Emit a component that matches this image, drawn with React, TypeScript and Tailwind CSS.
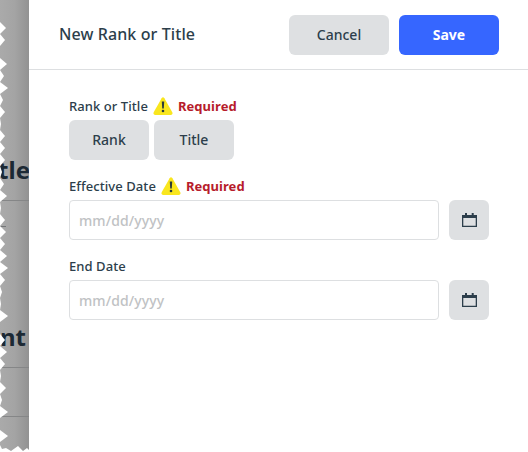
import { useState } from 'react'
import type { ReactNode } from 'react'

// depth of each notch in the torn left edge, one every 12px
const NOTCHES = [
  [28, 6], [40, 5], [64, 7], [76, 4], [88, 8], [100, 3], [112, 5], [124, 1], [136, 5], [148, 5],
  [160, 5], [172, 2], [184, 4], [196, 7], [208, 1], [220, 5], [232, 6], [244, 5], [256, 7], [268, 8],
  [280, 5], [292, 2], [304, 1], [316, 8], [340, 5], [352, 7], [364, 5], [376, 1], [388, 6],
  [400, 2], [412, 8], [436, 8],
]

function TornEdge() {
  return (
    <svg className="absolute inset-0" width="29" height="452" viewBox="0 0 29 452" fill="#fff">
      {NOTCHES.map(([y, depth]) => (
        <polygon key={y} points={`0,${y - 6} ${depth},${y} 0,${y + 6}`} />
      ))}
      <polygon points="0,445 2,449 6,448 11,451 18,446 23,451 27,448 29,450 29,452 0,452" />
    </svg>
  )
}

function WarningIcon() {
  return (
    <svg width="20" height="18" viewBox="0 0 20 18">
      <path
        d="M8.6 1.2Q10-.8 11.4 1.2L19.3 15.2Q20 17.6 17.8 18H2.2Q0 17.6.7 15.2Z"
        fill="#f9e61e"
      />
      <path d="M8.8 4.6H11.2L10.8 11.4H9.2Z" fill="#2b3b3a" />
      <circle cx="10" cy="14" r="1.3" fill="#2b3b3a" />
    </svg>
  )
}

function CalendarIcon() {
  return (
    <svg width="15" height="14" viewBox="0 0 15 14">
      <path d="M0 2H3V0H5V2H9.7V0H11.7V2H15V14H0ZM1.3 5V12.7H13.7V5Z" fill="#2c3e4b" fillRule="evenodd" />
    </svg>
  )
}

function FieldLabel({ children, required }: { children: ReactNode; required?: boolean }) {
  return (
    <div className="flex h-5 items-center text-[13px] font-medium leading-5">
      <span className="tracking-[0.07px]">{children}</span>
      {required && (
        <span className="ml-[5px] flex items-center gap-[5px] font-bold tracking-[0.05px] text-[#b71c2b]">
          <WarningIcon />
          Required
        </span>
      )}
    </div>
  )
}

function DateField({ label, required }: { label: string; required?: boolean }) {
  const [value, setValue] = useState('')

  return (
    <div>
      <FieldLabel required={required}>{label}</FieldLabel>
      <div className="mt-1 flex gap-2.5">
        <input
          aria-label={label}
          value={value}
          onChange={(e) => setValue(e.target.value)}
          placeholder="mm/dd/yyyy"
          className="h-10 w-[370px] rounded border border-[#dddfe1] px-[9px] text-sm font-medium tracking-[0.1px] placeholder:text-[#c0c2c4]"
        />
        <button
          aria-label="Open calendar"
          className="flex size-10 items-center justify-center rounded-md bg-[#dee0e2]"
        >
          <CalendarIcon />
        </button>
      </div>
    </div>
  )
}

export default function App() {
  return (
    <div className="flex h-[452px] w-[528px] overflow-hidden bg-white font-['Noto_Sans',sans-serif] text-[#2c3e4b]">
      {/* DIMMED PAGE */}
      <div className="relative w-[29px] shrink-0 overflow-hidden bg-linear-to-r from-[#aaaaaa] via-[#a4a4a4] to-[#929292] text-2xl font-bold text-[#1c2934]">
        <div className="flex h-[201px] items-end justify-end border-b border-[#858687] pb-3.5 leading-8">
          <span className="-mr-px">tle</span>
        </div>
        <div className="h-[25px]" />
        <div className="h-px w-1.5 bg-[#747678]" />
        <div className="flex h-[141px] items-end justify-end border-b border-[#858687] pb-3.5 pr-[3px] leading-8">
          <span>nt</span>
        </div>
        <div className="h-[49px] border-b border-[#858687]" />
        <TornEdge />
      </div>

      {/* DRAWER */}
      <div className="flex-1">
        <header className="flex h-[70px] items-center justify-between border-b border-[#dddfe1] pl-[30px] pr-[29px]">
          <h1 className="pb-0.5 text-base font-medium tracking-[0.1px]">New Rank or Title</h1>
          <div className="-ml-px mr-px flex gap-2.5 text-sm">
            <button className="h-10 w-[100px] rounded-md bg-[#dee0e2] font-medium">Cancel</button>
            <button className="h-10 w-[100px] rounded-md bg-[#3666ff] font-bold text-white">Save</button>
          </div>
        </header>

        <form className="flex flex-col gap-4 px-10 pt-[26px]">
          <div>
            <FieldLabel required>Rank or Title</FieldLabel>
            <div className="mt-1 flex gap-[5px] text-sm font-medium">
              <button type="button" className="h-10 w-20 rounded-md bg-[#dee0e2]">Rank</button>
              <button type="button" className="h-10 w-20 rounded-md bg-[#dee0e2]">Title</button>
            </div>
          </div>
          <DateField label="Effective Date" required />
          <DateField label="End Date" />
        </form>
      </div>
    </div>
  )
}
